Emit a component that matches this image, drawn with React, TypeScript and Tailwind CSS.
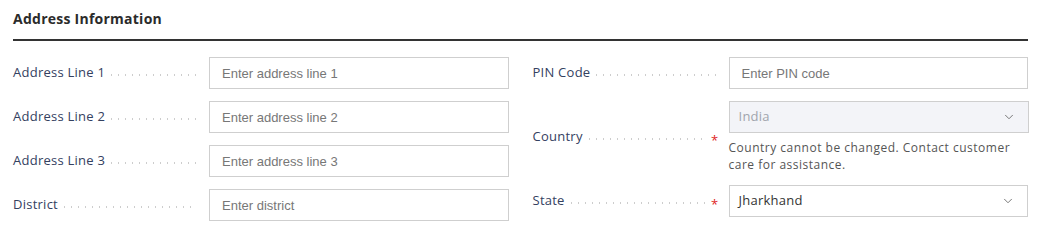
import { ChevronDown } from "lucide-react";

const labelFont = { fontFamily: '"Open Sans", "Noto Sans", sans-serif' };

function Label({ text, required }: { text: string; required?: boolean }) {
  return (
    <div className="flex items-center w-[196px] shrink-0 pr-[12px] text-[13px] tracking-[0.25px] text-[#34415f] font-['Open_Sans',sans-serif]">
      <span className="whitespace-nowrap">{text}</span>
      <div className="flex-1 h-[2px] mt-[3px] ml-[3px] bg-[radial-gradient(circle,#cdcdcd_0.9px,transparent_1.1px)] bg-[length:7px_2px] bg-repeat-x" />
      {required && (
        <span className="text-[#e02424] text-[13px] leading-none ml-[3px] mt-[6px] mr-[-2px]">*</span>
      )}
    </div>
  );
}

function TextInput({ placeholder }: { placeholder: string }) {
  return (
    <input
      placeholder={placeholder}
      className="w-[300px] h-[32px] border border-[#cfcfcf] bg-white px-[12px] text-[13px] font-['Liberation_Sans',Arial,sans-serif] text-[#333] placeholder:text-[#777] outline-none"
    />
  );
}

function Select({ value, disabled }: { value: string; disabled?: boolean }) {
  return (
    <div
      className={`w-[300px] h-[32px] border border-[#cfcfcf] flex items-center justify-between pl-[9px] pr-[12px] text-[13px] tracking-[0.25px] font-['Open_Sans',sans-serif] ${
        disabled ? "bg-[#f3f4f8] text-[#a0a4ad]" : "bg-white text-[#333]"
      }`}
    >
      <span>{value}</span>
      <ChevronDown className="w-[14px] h-[14px] text-[#666]" strokeWidth={1.5} />
    </div>
  );
}

export default function App() {
  return (
    <div className="w-[1040px] h-[238px] bg-white pl-[13px] pr-[12px] pt-[9px]" style={labelFont}>
      <h2 className="text-[14px] leading-[20px] font-bold tracking-[0.25px] text-[#2b2b2b] font-['Open_Sans',sans-serif]">
        Address Information
      </h2>
      <div className="mt-[10px] h-[2px] bg-[#333]" />

      <div className="grid grid-cols-2 gap-x-[24px] mt-[16px]">
        <div className="flex flex-col gap-[12px]">
          <div className="flex items-center">
            <Label text="Address Line 1" />
            <TextInput placeholder="Enter address line 1" />
          </div>
          <div className="flex items-center">
            <Label text="Address Line 2" />
            <TextInput placeholder="Enter address line 2" />
          </div>
          <div className="flex items-center">
            <Label text="Address Line 3" />
            <TextInput placeholder="Enter address line 3" />
          </div>
          <div className="flex items-center">
            <Label text="District" />
            <TextInput placeholder="Enter district" />
          </div>
        </div>

        <div className="flex flex-col gap-[12px]">
          <div className="flex items-center">
            <Label text="PIN Code" />
            <TextInput placeholder="Enter PIN code" />
          </div>
          <div className="flex items-center">
            <Label text="Country" required />
            <div className="w-[300px]">
              <Select value="India" disabled />
              <p className="mt-[6px] text-[12px] leading-[17px] tracking-[0.5px] text-[#555] font-['Open_Sans',sans-serif]">
                Country cannot be changed. Contact customer care for assistance.
              </p>
            </div>
          </div>
          <div className="flex items-center">
            <Label text="State" required />
            <Select value="Jharkhand" />
          </div>
        </div>
      </div>
    </div>
  );
}
